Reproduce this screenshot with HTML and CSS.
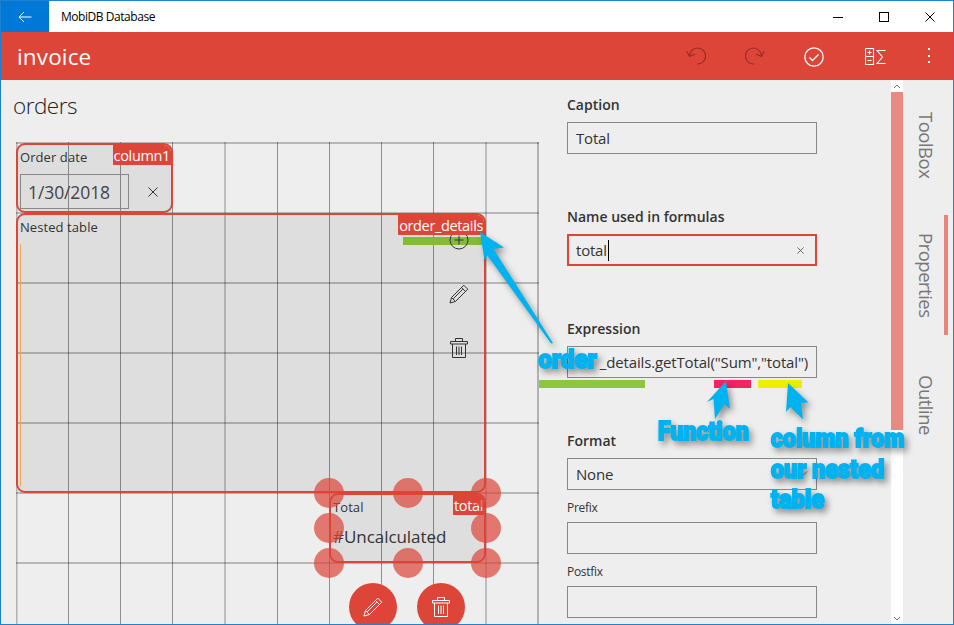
FILE: index.html
```html
<!DOCTYPE html>
<html lang="en">
<head>
<meta charset="utf-8">
<title>MobiDB Database</title>
<link rel="stylesheet" href="styles.css">
</head>
<body>
<svg class="symbols" width="0" height="0">
  <symbol id="pencil" viewBox="0 0 20 20"><path d="M1 19l1.500-5.500L14.800 1.200l4 4L6.500 17.500zM2.500 13.500l4 4M12.500 3.500l4 4M4.300 14.700L13.800 5.200"/></symbol>
  <symbol id="trash" viewBox="0 0 18 20"><path d="M.5 3.500h17v2.500H.5zM5.500 3.500v-3h7v3M2.500 6v13.500h13V6M6.500 8.500v8.500M9 8.500v8.500M11.500 8.500v8.500"/></symbol>
  <symbol id="cross" viewBox="0 0 10 10"><path d="M.5.5l9 9M9.500.5l-9 9"/></symbol>
</svg>
<div class="window">
  <header class="titlebar">
    <div class="back"><svg width="14" height="12" viewBox="0 0 14 12"><path d="M13.500 6H1M6 1L1 6l5 5"/></svg></div>
    <span class="app-name">MobiDB Database</span>
    <div class="window-buttons">
      <svg width="10" height="10"><path d="M0 5.500h10"/></svg>
      <svg width="10" height="10"><rect x=".5" y=".5" width="9" height="9"/></svg>
      <svg width="10" height="10"><use href="#cross"/></svg>
    </div>
  </header>
  <div class="appbar">
    <h1>invoice</h1>
    <div class="commands">
      <svg class="dim" width="20" height="20" viewBox="0 0 20 20"><path d="M.7 4.500L3.600 9.500 9 7M3.600 9.500A8 8 0 1 1 11 17"/></svg>
      <svg class="dim" width="20" height="20" viewBox="0 0 20 20"><path d="M19.300 4.500L16.400 9.500 11 7M16.400 9.500A8 8 0 1 0 9 17"/></svg>
      <svg width="20" height="20" viewBox="0 0 20 20"><circle cx="10" cy="10" r="9.200"/><path d="M5.500 10.500l3 3 6-6"/></svg>
      <svg width="21" height="20" viewBox="0 0 21 20"><path d="M.5 1.500h8v16h-8zM.5 9.500h8M4.500 3.500v4M2.500 5.500h4M2.500 13.500h4M20.500 3.500h-8.500l5.500 6.500-5.500 6.500h8.500"/></svg>
      <svg class="more" width="20" height="20" viewBox="0 0 20 20"><path d="M9 2h2v2H9zM9 9h2v2H9zM9 15h2v2H9z"/></svg>
    </div>
  </div>
  <main class="body">
    <section class="designer">
      <h2>orders</h2>
      <div class="canvas">
        <svg class="grid" width="524" height="484">
          <g class="rows"><path d="M0 1h523M0 71h523M0 141h523M0 211h523M0 281h523M0 351h523M0 421h523"/></g>
          <g class="cols"><path d="M52.500 0v484M104.500 0v484M156.500 0v484M209 0v484M261.500 0v484M313.500 0v484M365.500 0v484M417.500 0v484M470 0v484"/></g>
          <g class="edges"><path d="M.5 0v484M522 0v484"/></g>
        </svg>
        <div class="item date-item">
          <span class="item-label">Order date</span>
          <div class="date-row"><span class="date-box">1/30/2018</span><svg width="10" height="10"><use href="#cross"/></svg></div>
          <span class="tag">column1</span>
        </div>
        <div class="item table-item">
          <span class="item-label">Nested table</span>
          <i class="accent"></i><i class="mark"></i>
          <div class="tools">
            <svg width="20" height="20" viewBox="0 0 20 20"><circle cx="10" cy="10" r="9"/><path d="M10 5.500v9M5.500 10h9"/></svg>
            <svg width="20" height="20"><use href="#pencil"/></svg>
            <svg width="18" height="20"><use href="#trash"/></svg>
          </div>
          <span class="tag">order_details</span>
        </div>
        <div class="item total-item">
          <span class="item-label">Total</span>
          <span class="value">#Uncalculated</span>
          <span class="tag">total</span>
        </div>
        <svg class="handles" width="524" height="484"><circle cx="313" cy="351" r="15"/><circle cx="392" cy="351" r="15"/><circle cx="470" cy="351" r="15"/><circle cx="313" cy="386" r="15"/><circle cx="470" cy="386" r="15"/><circle cx="313" cy="421" r="15"/><circle cx="392" cy="421" r="15"/><circle cx="470" cy="421" r="15"/></svg>
        <div class="fabs">
          <div class="fab"><svg width="20" height="20"><use href="#pencil"/></svg></div>
          <div class="fab"><svg width="18" height="20"><use href="#trash"/></svg></div>
        </div>
      </div>
    </section>
    <section class="properties">
      <div class="field"><label>Caption</label><div class="input">Total</div></div>
      <div class="field"><label>Name used in formulas</label><div class="input focused"><span>total</span><i class="caret"></i><svg class="clear" width="7" height="7" viewBox="0 0 10 10"><use href="#cross"/></svg></div></div>
      <div class="field"><label>Expression</label><div class="input expr">_details.getTotal("Sum","total")</div></div>
      <div class="field format"><label>Format</label><div class="input">None<svg class="chevron" width="10" height="6"><path d="M1 .5l4 4 4-4"/></svg></div></div>
      <div class="subfield"><label>Prefix</label><div class="input"></div></div>
      <div class="subfield"><label>Postfix</label><div class="input"></div></div>
    </section>
    <div class="scrollbar">
      <div class="arrow"><svg width="8" height="5"><path d="M1 4l3-3 3 3"/></svg></div>
      <div class="thumb"></div>
      <div class="arrow"><svg width="8" height="5"><path d="M1 1l3 3 3-3"/></svg></div>
    </div>
    <nav class="tabs"><span class="tab toolbox">ToolBox</span><span class="tab active">Properties</span><span class="tab outline">Outline</span></nav>
  </main>
  <svg class="notes" width="954" height="625">
    <path class="green" d="M539 380h106v8H539z"/><path class="pink" d="M714 380h37v8h-37z"/><path class="yellow" d="M758 380h44v8h-44z"/>
    <g class="shadowed">
      <path d="M480 232L504 247.500 493.500 249 553 343 551 343.500 487.500 255.500 484.500 260z"/>
      <path d="M726 381L730 409 724.500 404 715 419 713.500 399 707 402z"/>
      <path d="M788 383L808.500 402.500 801 403 803 419.500 790.500 407 786 412z"/>
      <text x="538.500" y="368" textLength="58.500" lengthAdjust="spacingAndGlyphs">order</text>
      <text x="658" y="440" textLength="91" lengthAdjust="spacingAndGlyphs">Function</text>
      <text x="771" y="446.500" textLength="133.500" lengthAdjust="spacingAndGlyphs">column from</text>
      <text x="771" y="477.500" textLength="113.500" lengthAdjust="spacingAndGlyphs">our nested</text>
      <text x="771" y="507.500" textLength="53.500" lengthAdjust="spacingAndGlyphs">table</text>
    </g>
  </svg>
</div>
</body>
</html>
```

FILE: styles.css
```css
* { box-sizing: border-box; }
body { margin: 0; font-family: "Open Sans", "Noto Sans", sans-serif; color: #333; }
svg { display: block; fill: none; stroke: currentColor; }
.symbols { position: absolute; }
h1, h2 { margin: 0; font-weight: 400; }
.window { position: relative; width: 954px; height: 625px; overflow: hidden; border: 1px solid #1e82d2; background: #eee; display: flex; flex-direction: column; }
.titlebar { height: 31px; flex: none; background: #fff; color: #000; display: flex; align-items: center; }
.back { width: 48px; height: 31px; background: #0078d7; color: #fff; display: grid; place-items: center; }
.app-name { margin-left: 12px; font-size: 12px; letter-spacing: -.45px; }
.window-buttons { margin-left: auto; margin-right: 18px; display: flex; gap: 36px; }
.appbar { height: 48px; flex: none; background: #dd4539; color: #fff; display: flex; align-items: center; justify-content: space-between; padding: 0 14px 0 16px; }
.appbar h1 { font-size: 22.5px; line-height: 30px; margin-top: 2px; letter-spacing: .15px; }
.commands { display: flex; align-items: center; }
.commands svg { margin-right: 39px; stroke-width: 1.1; }
.commands svg:nth-child(3) { margin: 1px 41px 0 0; stroke-width: 1.3; }
.commands svg:nth-child(4) { margin: 1px 33px 0 0; }
.commands svg.more { margin-right: 0; fill: #fff; stroke: none; }
.commands .dim { color: #962c24; margin-top: 1px; }
.body { height: 544px; display: flex; }
.designer { width: 537px; flex: none; padding: 10px 0 0 12px; }
h2 { font-size: 22.5px; line-height: 32px; font-weight: 300; letter-spacing: -.5px; color: #222; }
.canvas { position: relative; margin: 20px 0 0 3px; width: 524px; height: 482px; }
.grid { position: absolute; left: 0; top: 0; }
.grid .rows { stroke: rgba(0,0,0,.23); stroke-width: 2; }
.grid .cols { stroke: rgba(0,0,0,.4); stroke-width: 1; }
.grid .edges { stroke: rgba(0,0,0,.25); stroke-width: 2; }
.item { position: absolute; border: 2px solid #dd4539; border-radius: 9px; background: rgba(0,0,0,.065); overflow: hidden; display: flex; flex-direction: column; }
.date-item { left: 0; top: 1px; width: 157px; height: 70px; }
.table-item { left: 0; top: 71px; width: 470px; height: 280px; }
.total-item { left: 313px; top: 351px; width: 157px; height: 70px; }
.item-label { font-size: 13px; line-height: 18px; margin: 3px 0 0 2px; letter-spacing: .08px; white-space: nowrap; }
.date-row { display: flex; align-items: center; margin: 8px 0 0 2px; gap: 19px; }
.date-box { width: 109px; height: 35px; border: 1px solid #888; padding: 1px 0 0 7px; font-size: 17.5px; line-height: 33px; letter-spacing: -.1px; color: #444; }
.tag { position: absolute; right: -1px; top: 0; height: 20px; padding: 1px 2px 0 1px; background: #dd4539; color: #fff; font-size: 14.5px; line-height: 19px; letter-spacing: -.35px; white-space: nowrap; }
.value { font-size: 17px; line-height: 24px; margin: 9px 0 0 2px; letter-spacing: -.05px; }
.accent { position: absolute; left: 2px; top: 29px; width: 1px; height: 242px; background: #efaa4d; }
.mark { position: absolute; right: 0; top: 22px; width: 81px; height: 8px; background: #84ba38; }
.tools { position: absolute; right: 15px; top: 15px; display: flex; flex-direction: column; align-items: center; gap: 34px; }
.handles { position: absolute; left: 0; top: 0; fill: rgba(221,69,57,.7); stroke: none; }
.fabs { position: absolute; left: 333px; top: 441px; display: flex; gap: 20px; }
.fab { width: 48px; height: 48px; border-radius: 50%; background: #dd4539; color: #fff; display: grid; place-items: center; }
.properties { width: 353px; flex: none; padding: 15px 0 0 29px; font-size: 15px; }
.field { height: 112px; display: flex; flex-direction: column; gap: 7px; }
.field.format { height: 67px; }
.field label { font-size: 14px; line-height: 20px; font-weight: 600; align-self: flex-start; white-space: nowrap; }
.input { position: relative; width: 250px; height: 32px; flex: none; border: 1px solid #888; padding: 0 8px; display: flex; align-items: center; font-size: 15px; line-height: 30px; letter-spacing: -.2px; }
.input.focused { border: 2px solid #dd4539; padding: 0 7px; }
.caret { width: 1px; height: 21px; background: #000; margin-left: 1px; }
.clear { margin-left: auto; margin-right: 4px; }
.expr { justify-content: flex-end; white-space: nowrap; letter-spacing: -.15px; }
.chevron { margin-left: auto; color: #777; }
.subfield { height: 64px; font-size: 12px; }
.subfield label { display: block; padding-top: 2px; line-height: 16px; letter-spacing: -.3px; }
.subfield .input { margin-top: 6px; }
.scrollbar { width: 12px; flex: none; background: #fff; display: flex; flex-direction: column; color: #777; }
.arrow { height: 12px; display: grid; place-items: center; }
.arrow:last-child { margin-top: auto; }
.thumb { height: 338px; background: #e98a82; }
.tabs { width: 50px; display: flex; flex-direction: column; padding: 15px 5px 0 0; color: #777; }
.tab { height: 120px; flex: none; writing-mode: vertical-rl; text-align: center; font-size: 18.5px; line-height: 36px; letter-spacing: -.5px; border-right: 4px solid transparent; }
.tab.toolbox { padding-bottom: 20px; }
.tab.outline { padding-top: 20px; }
.tab.active { border-color: #e7847c; }
.notes { position: absolute; left: -1px; top: -1px; stroke: none; }
.green { fill: #8dc63f; }
.pink { fill: #f32462; }
.yellow { fill: #eeee00; }
.shadowed { fill: #00b2f0; filter: drop-shadow(3px 4px 3px rgba(0,0,0,.4)); }
.notes text { font: 900 26px Roboto, "Open Sans", sans-serif; stroke: #00b2f0; stroke-width: 1.8; }
```
